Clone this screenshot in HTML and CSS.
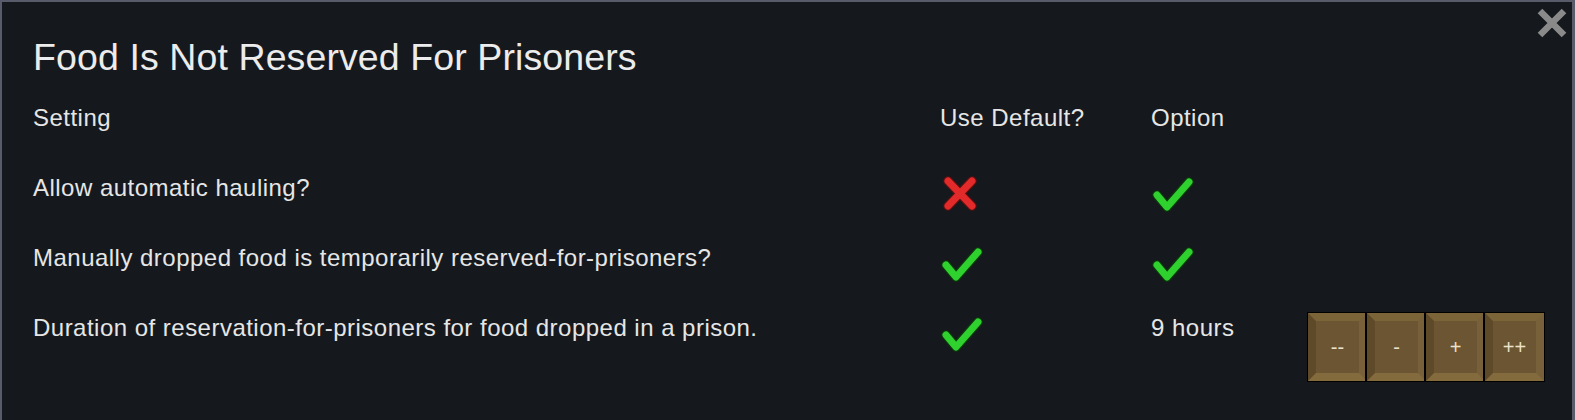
FILE: index.html
```html
<!DOCTYPE html>
<html>
<head>
<meta charset="utf-8">
<link rel="stylesheet" href="styles.css">
</head>
<body>
<div class="window">
  <button class="close" aria-label="Close">
    <svg width="32" height="32" viewBox="0 0 32 32"><path d="M4 4 L28 28 M28 4 L4 28" stroke="#8a8a8a" stroke-width="6.5" stroke-linecap="butt"/></svg>
  </button>
  <h1 class="title">Food Is Not Reserved For Prisoners</h1>
  <div class="grid">
    <div class="cell head">Setting</div>
    <div class="cell head">Use Default?</div>
    <div class="cell head">Option</div>
    <div class="cell"></div>

    <div class="cell">Allow automatic hauling?</div>
    <div class="cell icon"><svg width="40" height="40" viewBox="0 0 40 40"><path d="M7 7 L31 32 M31 7 L7 32" stroke="#5a1010" stroke-width="9.5" stroke-linecap="round"/><path d="M7 7 L31 32 M31 7 L7 32" stroke="#e22a2a" stroke-width="7" stroke-linecap="round"/></svg></div>
    <div class="cell icon opt"><svg width="42" height="40" viewBox="0 0 42 40"><path d="M5 21 L15 33 L37 8" fill="none" stroke="#0b380b" stroke-width="9.5" stroke-linecap="round" stroke-linejoin="round"/><path d="M5 21 L15 33 L37 8" fill="none" stroke="#2ed12e" stroke-width="7" stroke-linecap="round" stroke-linejoin="round"/></svg></div>
    <div class="cell"></div>

    <div class="cell">Manually dropped food is temporarily reserved-for-prisoners?</div>
    <div class="cell icon"><svg width="42" height="40" viewBox="0 0 42 40"><path d="M5 21 L15 33 L37 8" fill="none" stroke="#0b380b" stroke-width="9.5" stroke-linecap="round" stroke-linejoin="round"/><path d="M5 21 L15 33 L37 8" fill="none" stroke="#2ed12e" stroke-width="7" stroke-linecap="round" stroke-linejoin="round"/></svg></div>
    <div class="cell icon opt"><svg width="42" height="40" viewBox="0 0 42 40"><path d="M5 21 L15 33 L37 8" fill="none" stroke="#0b380b" stroke-width="9.5" stroke-linecap="round" stroke-linejoin="round"/><path d="M5 21 L15 33 L37 8" fill="none" stroke="#2ed12e" stroke-width="7" stroke-linecap="round" stroke-linejoin="round"/></svg></div>
    <div class="cell"></div>

    <div class="cell">Duration of reservation-for-prisoners for food dropped in a prison.</div>
    <div class="cell icon"><svg width="42" height="40" viewBox="0 0 42 40"><path d="M5 21 L15 33 L37 8" fill="none" stroke="#0b380b" stroke-width="9.5" stroke-linecap="round" stroke-linejoin="round"/><path d="M5 21 L15 33 L37 8" fill="none" stroke="#2ed12e" stroke-width="7" stroke-linecap="round" stroke-linejoin="round"/></svg></div>
    <div class="cell">9 hours</div>
    <div class="cell btns">
      <button class="btn">--</button>
      <button class="btn">-</button>
      <button class="btn">+</button>
      <button class="btn">++</button>
    </div>
  </div>
</div>
</body>
</html>
```

FILE: styles.css
```css
html, body {
  margin: 0;
  padding: 0;
  background: #15191d;
}
.window {
  position: relative;
  box-sizing: border-box;
  width: 1575px;
  height: 420px;
  background: #15191d;
  border-top: 2px solid #575b6a;
  border-left: 2px solid #575b6a;
  border-right: 3px solid #575b6a;
  padding: 35px 0 0 31px;
  font-family: "Liberation Sans", Arial, sans-serif;
  color: #e6e6e6;
}
.close {
  position: absolute;
  top: 5px;
  right: 4px;
  padding: 0;
  border: 0;
  background: none;
  width: 32px;
  height: 32px;
}
.close svg { display: block; }
.title {
  margin: 0;
  font-weight: normal;
  font-size: 37.5px;
  letter-spacing: 0.1px;
  line-height: 40px;
  height: 40px;
  color: #ececec;
}
.grid {
  margin-top: 6px;
  display: grid;
  grid-template-columns: 907px 211px 156px auto;
  grid-auto-rows: 70px;
  font-size: 24px;
  letter-spacing: 0.48px;
}
.cell {
  display: flex;
  align-items: center;
}
.icon {
  padding-top: 11px;
  padding-left: 1px;
}
.icon svg { display: block; }
.btns {
  align-items: flex-start;
  padding-top: 20px;
  padding-left: 1px;
}
.btn {
  box-sizing: border-box;
  width: 59px;
  height: 68px;
  background: #6b5532;
  border-style: solid;
  border-width: 8px;
  border-color: #7b6437 #77603a #846b3d #5e4a29;
  box-shadow: 0 0 0 1px #000;
  margin: 0;
  color: #ece2cc;
  font-family: "Liberation Sans", Arial, sans-serif;
  font-size: 20px;
  font-weight: normal;
  letter-spacing: 0;
  padding: 0;
}
.btn + .btn { box-shadow: 0 0 0 1px #000, -1px 0 0 1px #000; }
```
